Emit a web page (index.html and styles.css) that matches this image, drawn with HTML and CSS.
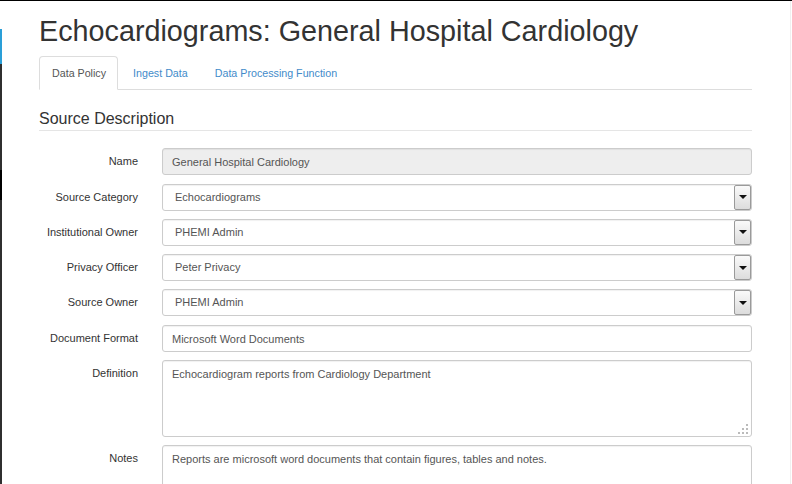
FILE: index.html
```html
<!DOCTYPE html>
<html>
<head>
<meta charset="utf-8">
<link rel="stylesheet" href="styles.css">
</head>
<body>
<div class="frame">
  <div class="edge">
    <div class="edge-white"></div>
    <div class="edge-blue"></div>
    <div class="edge-dark"></div>
    <div class="edge-black"></div>
    <div class="edge-dark2"></div>
  </div>
  <main class="page">
    <h1 class="title">Echocardiograms: General Hospital Cardiology</h1>
    <ul class="tabs">
      <li class="tab active"><a>Data Policy</a></li>
      <li class="tab"><a>Ingest Data</a></li>
      <li class="tab"><a>Data Processing Function</a></li>
    </ul>
    <h3 class="section">Source Description</h3>
    <div class="form">
      <div class="row">
        <div class="label">Name</div>
        <div class="field readonly">General Hospital Cardiology</div>
      </div>
      <div class="row">
        <div class="label">Source Category</div>
        <div class="field select"><span class="value">Echocardiograms</span><span class="arrow"><span class="tri"></span></span></div>
      </div>
      <div class="row">
        <div class="label">Institutional Owner</div>
        <div class="field select"><span class="value">PHEMI Admin</span><span class="arrow"><span class="tri"></span></span></div>
      </div>
      <div class="row">
        <div class="label">Privacy Officer</div>
        <div class="field select"><span class="value">Peter Privacy</span><span class="arrow"><span class="tri"></span></span></div>
      </div>
      <div class="row">
        <div class="label">Source Owner</div>
        <div class="field select"><span class="value">PHEMI Admin</span><span class="arrow"><span class="tri"></span></span></div>
      </div>
      <div class="row">
        <div class="label">Document Format</div>
        <div class="field">Microsoft Word Documents</div>
      </div>
      <div class="row">
        <div class="label">Definition</div>
        <div class="field area">Echocardiogram reports from Cardiology Department<span class="grip"><i></i><i></i><i></i><i></i><i></i><i></i></span></div>
      </div>
      <div class="row">
        <div class="label">Notes</div>
        <div class="field area">Reports are microsoft word documents that contain figures, tables and notes.</div>
      </div>
    </div>
  </main>
</div>
</body>
</html>
```
FILE: styles.css
```css
html, body {
  margin: 0;
  padding: 0;
  background: #fff;
}
body {
  font-family: "Liberation Sans", Arial, sans-serif;
  color: #333;
  overflow: hidden;
}
.frame {
  display: flex;
  border-top: 1px solid #000;
  height: 483px;
  overflow: hidden;
}
.edge {
  width: 2px;
  flex: none;
  display: flex;
  flex-direction: column;
}
.edge-white { height: 28px; background: #fff; }
.edge-blue { height: 35px; background: #2a9fd8; }
.edge-dark { height: 106px; background: #2f2f2f; }
.edge-black { height: 30px; background: #000; }
.edge-dark2 { flex: 1; background: #2f2f2f; }

.page {
  flex: none;
  width: 751px;
  padding-left: 37px;
  border-right: 1px solid #f0f0f0;
}
.title {
  margin: 15px 0 0;
  font-size: 28.75px;
  font-weight: normal;
  line-height: 1.1;
  color: #333;
}
.tabs {
  list-style: none;
  margin: 8px 0 0;
  padding: 0;
  width: 713px;
  display: flex;
  border-bottom: 1px solid #ddd;
}
.tab {
  margin-right: 2px;
  margin-bottom: -1px;
}
.tab a {
  display: block;
  padding: 9px 11px 9px 12px;
  font-size: 10.7px;
  line-height: 14px;
  color: #428bca;
  border: 1px solid transparent;
  border-radius: 4px 4px 0 0;
}
.tab.active a {
  color: #555;
  background: #fff;
  border-color: #ddd #ddd transparent;
}
.section {
  margin: 20px 0 0;
  width: 713px;
  font-size: 16px;
  font-weight: normal;
  line-height: 1.1;
  padding-bottom: 3px;
  border-bottom: 1px solid #e5e5e5;
}
.form {
  margin-top: 17px;
  width: 713px;
}
.row {
  display: grid;
  grid-template-columns: 99px 1fr;
  column-gap: 24px;
  margin-bottom: 8.3px;
}
.label {
  text-align: right;
  font-size: 11px;
  line-height: 13px;
  padding-top: 7px;
  color: #333;
}
.field {
  box-sizing: border-box;
  height: 27px;
  padding: 7px 9px;
  font-size: 11px;
  line-height: 13px;
  color: #555;
  border: 1px solid #ccc;
  border-radius: 3px;
  background: #fff;
  box-shadow: inset 0 1px 1px rgba(0,0,0,0.06);
  white-space: nowrap;
}
.field.readonly {
  background: #eee;
}
.field.select {
  display: flex;
  align-items: flex-start;
  padding: 0;
}
.field.select .value {
  flex: 1;
  padding: 6px 12px;
}
.arrow {
  box-sizing: border-box;
  width: 17px;
  height: 25px;
  border: 1px solid #9a9a9a;
  border-radius: 2px;
  background: linear-gradient(#fafafa, #dcdcdc);
  display: flex;
  align-items: center;
  justify-content: center;
}
.tri {
  width: 0;
  height: 0;
  border-left: 4px solid transparent;
  border-right: 4px solid transparent;
  border-top: 4px solid #111;
}
.field.area {
  height: 77px;
  position: relative;
  white-space: normal;
}
.grip {
  position: absolute;
  right: 3px;
  bottom: 2px;
  width: 10px;
  height: 10px;
  display: grid;
  grid-template-columns: repeat(3, 2px);
  grid-template-rows: repeat(3, 2px);
  gap: 2px;
}
.grip i {
  display: block;
  width: 2px;
  height: 2px;
  background: #bbb;
}
.grip i:nth-child(1) { grid-column: 3; grid-row: 1; }
.grip i:nth-child(2) { grid-column: 2; grid-row: 2; }
.grip i:nth-child(3) { grid-column: 3; grid-row: 2; }
.grip i:nth-child(4) { grid-column: 1; grid-row: 3; }
.grip i:nth-child(5) { grid-column: 2; grid-row: 3; }
.grip i:nth-child(6) { grid-column: 3; grid-row: 3; }
```
